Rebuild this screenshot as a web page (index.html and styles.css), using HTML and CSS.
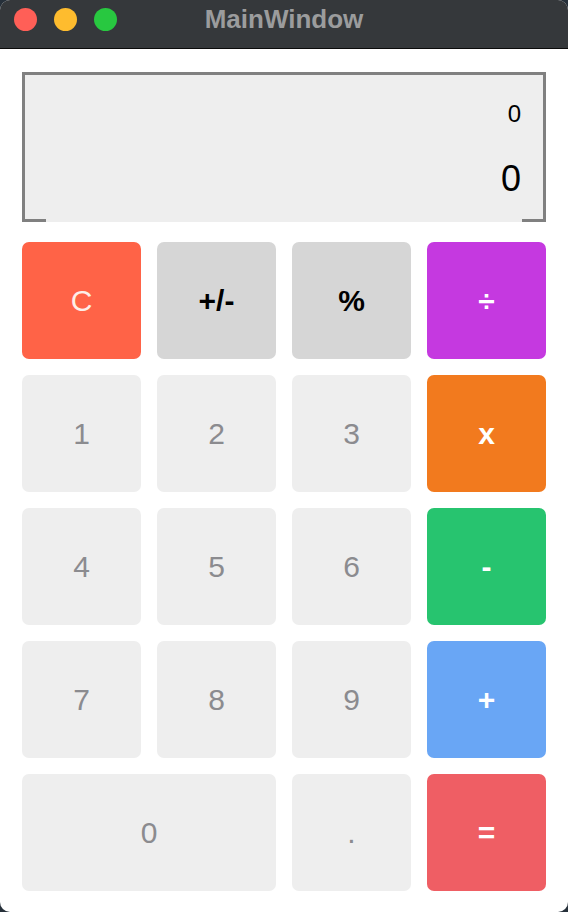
FILE: index.html
```html
<!DOCTYPE html>
<html>
<head>
<meta charset="utf-8">
<link rel="stylesheet" href="styles.css">
</head>
<body>
<div class="window">
  <div class="titlebar">
    <div class="lights">
      <span class="light red"></span>
      <span class="light yellow"></span>
      <span class="light green"></span>
    </div>
    <div class="title">MainWindow</div>
  </div>
  <div class="content">
    <div class="display">
      <div class="expr">0</div>
      <div class="result">0</div>
    </div>
    <div class="keys">
      <div class="key clear">C</div>
      <div class="key func">+/-</div>
      <div class="key func">%</div>
      <div class="key op div">÷</div>
      <div class="key num">1</div>
      <div class="key num">2</div>
      <div class="key num">3</div>
      <div class="key op mul">x</div>
      <div class="key num">4</div>
      <div class="key num">5</div>
      <div class="key num">6</div>
      <div class="key op sub">-</div>
      <div class="key num">7</div>
      <div class="key num">8</div>
      <div class="key num">9</div>
      <div class="key op add">+</div>
      <div class="key num zero">0</div>
      <div class="key num">.</div>
      <div class="key op eq">=</div>
    </div>
  </div>
</div>
</body>
</html>
```
FILE: styles.css
```css
html, body {
  margin: 0;
  padding: 0;
}
body {
  width: 568px;
  height: 912px;
  background: #26303a;
  overflow: hidden;
  font-family: "Liberation Sans", Arial, sans-serif;
}
.window {
  width: 568px;
  height: 912px;
  border-radius: 10px;
  overflow: hidden;
  background: #ffffff;
  display: flex;
  flex-direction: column;
}
.titlebar {
  height: 48px;
  flex: 0 0 48px;
  background: #35383b;
  border-bottom: 1px solid #0b0b0b;
  display: flex;
  align-items: center;
  justify-content: center;
  position: relative;
}
.lights {
  position: absolute;
  left: 14px;
  top: 8px;
  display: flex;
  gap: 17px;
}
.light {
  width: 23px;
  height: 23px;
  border-radius: 50%;
  display: block;
}
.red { background: #ff5f57; }
.yellow { background: #febc2e; }
.green { background: #28c840; }
.title {
  color: #9b9c9d;
  font-weight: bold;
  font-size: 26px;
  line-height: 30px;
  margin-top: -10px;
}
.content {
  flex: 1;
  padding: 23px 22px 0 22px;
  display: flex;
  flex-direction: column;
  gap: 20px;
}
.display {
  height: 147px;
  background: #eeeeee;
  border: 3px solid #808080;
  border-bottom: none;
  position: relative;
  display: flex;
  flex-direction: column;
  align-items: flex-end;
  padding-right: 22px;
  color: #000;
}
.display::before,
.display::after {
  content: "";
  position: absolute;
  bottom: 0;
  width: 21px;
  height: 3px;
  background: #808080;
}
.display::before { left: 0; }
.display::after { right: 0; }
.expr {
  font-size: 24px;
  margin-top: 24px;
  line-height: 30px;
}
.result {
  font-size: 36px;
  margin-top: 30px;
  line-height: 40px;
}
.keys {
  display: grid;
  grid-template-columns: repeat(4, 119px);
  grid-template-rows: repeat(5, 117px);
  gap: 16px;
}
.key {
  border-radius: 7px;
  display: flex;
  align-items: center;
  justify-content: center;
  font-size: 30px;
}
.num {
  background: #eeeeee;
  color: #8b8b8f;
}
.zero {
  grid-column: span 2;
}
.func {
  background: #d6d6d6;
  color: #000;
  font-weight: bold;
}
.clear {
  background: #ff6347;
  color: #fdeee8;
}
.op {
  color: #ffffff;
  font-weight: bold;
}
.div { background: #c539e0; }
.mul { background: #f27a1e; }
.sub { background: #27c46f; }
.add { background: #69a6f5; }
.eq { background: #ef5e64; }
```
